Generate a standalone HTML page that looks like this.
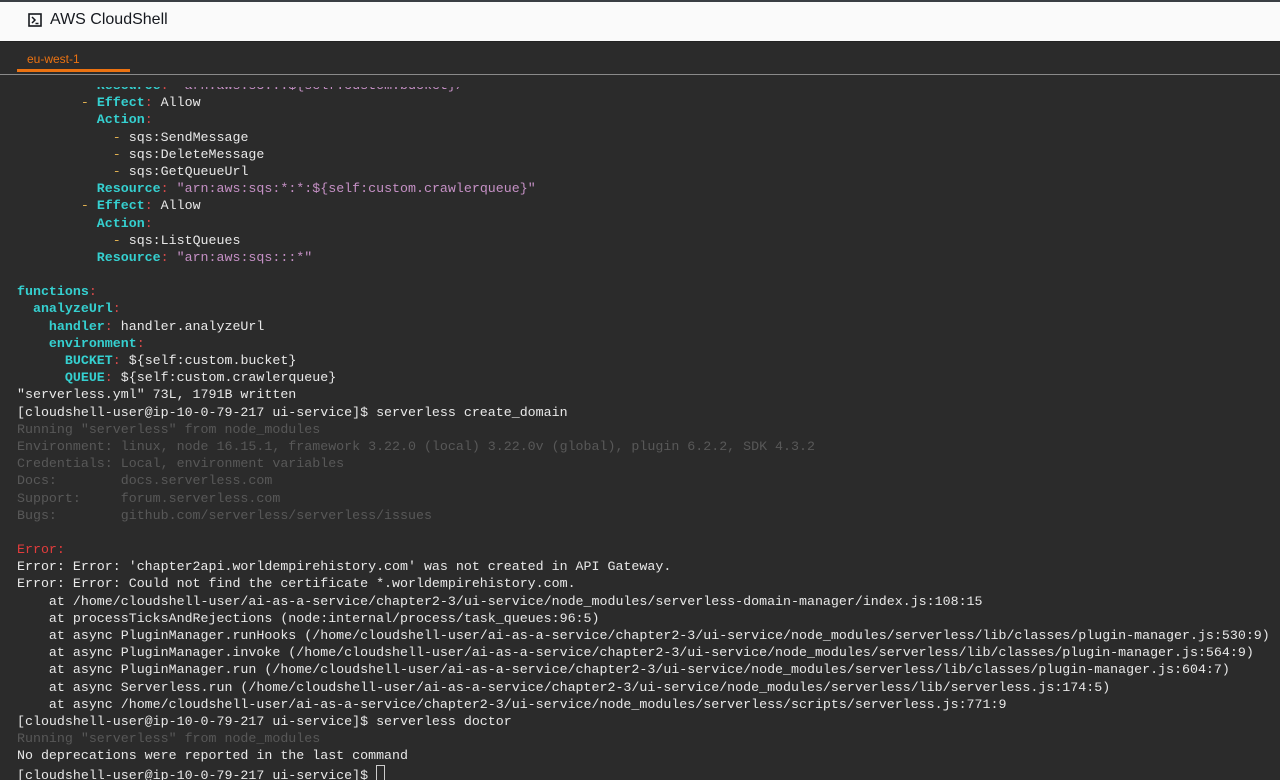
<!DOCTYPE html>
<html><head><meta charset="utf-8"><style>
html,body{margin:0;padding:0;width:1280px;height:780px;overflow:hidden;background:#2b2b2b}
#hdr{position:absolute;left:0;top:0;width:1280px;height:42px;background:#fafafa;border-top:2px solid #3a3f44;box-sizing:border-box;border-bottom:1px solid #222}
#hdr .t{position:absolute;left:50px;top:9px;font:16px "Liberation Sans",sans-serif;color:#16191f}
#hdr svg{position:absolute;left:28px;top:11px}
#tabs{position:absolute;left:0;top:42px;width:1280px;height:32px;background:#2b2b2b;border-bottom:1px solid #8a8a8a}
#tabs .tab{position:absolute;left:17px;top:0;width:113px;height:30px;border-bottom:3px solid #ec7211;box-sizing:border-box;font:12px "Liberation Sans",sans-serif;color:#ec7211;padding:10px 0 0 10px}
#term{position:absolute;left:0;top:77px;width:1280px;height:703px;overflow:hidden}
pre{margin:0;padding:0 0 0 17px;font:13.3px/17.18px "Liberation Mono",monospace;color:#e8e8e8;white-space:pre}
#mask{position:absolute;left:0;top:75px;width:1280px;height:12px;background:#2b2b2b}
.k{color:#35d0d0;font-weight:bold}.c{color:#d84a4a}.s{color:#c590c5}.d{color:#e0b050}.g{color:#585858}.e{color:#e23c3c}
.cur{display:inline-block;width:7px;height:15px;border:1px solid #ccc;vertical-align:-3px}
</style></head><body>
<div id="hdr"><svg width="14" height="14" viewBox="0 0 14 14"><rect x="1" y="1" width="12" height="12" fill="none" stroke="#16191f" stroke-width="1.6"/><path d="M4 4l3 3-3 3M7.5 10.5h3" fill="none" stroke="#16191f" stroke-width="1.5"/></svg><span class="t">AWS CloudShell</span></div>
<div id="tabs"><div class="tab">eu-west-1</div></div>
<div id="term"><pre>          <span class="k">Resource</span><span class="c">:</span> <span class="s">"arn:aws:s3:::${self:custom.bucket}/*"</span>
        <span class="d">-</span> <span class="k">Effect</span><span class="c">:</span> Allow
          <span class="k">Action</span><span class="c">:</span>
            <span class="d">-</span> sqs:SendMessage
            <span class="d">-</span> sqs:DeleteMessage
            <span class="d">-</span> sqs:GetQueueUrl
          <span class="k">Resource</span><span class="c">:</span> <span class="s">"arn:aws:sqs:*:*:${self:custom.crawlerqueue}"</span>
        <span class="d">-</span> <span class="k">Effect</span><span class="c">:</span> Allow
          <span class="k">Action</span><span class="c">:</span>
            <span class="d">-</span> sqs:ListQueues
          <span class="k">Resource</span><span class="c">:</span> <span class="s">"arn:aws:sqs:::*"</span>

<span class="k">functions</span><span class="c">:</span>
  <span class="k">analyzeUrl</span><span class="c">:</span>
    <span class="k">handler</span><span class="c">:</span> handler.analyzeUrl
    <span class="k">environment</span><span class="c">:</span>
      <span class="k">BUCKET</span><span class="c">:</span> ${self:custom.bucket}
      <span class="k">QUEUE</span><span class="c">:</span> ${self:custom.crawlerqueue}
"serverless.yml" 73L, 1791B written
[cloudshell-user@ip-10-0-79-217 ui-service]$ serverless create_domain
<span class="g">Running "serverless" from node_modules
Environment: linux, node 16.15.1, framework 3.22.0 (local) 3.22.0v (global), plugin 6.2.2, SDK 4.3.2
Credentials: Local, environment variables
Docs:        docs.serverless.com
Support:     forum.serverless.com
Bugs:        github.com/serverless/serverless/issues</span>

<span class="e">Error:</span>
Error: Error: 'chapter2api.worldempirehistory.com' was not created in API Gateway.
Error: Error: Could not find the certificate *.worldempirehistory.com.
    at /home/cloudshell-user/ai-as-a-service/chapter2-3/ui-service/node_modules/serverless-domain-manager/index.js:108:15
    at processTicksAndRejections (node:internal/process/task_queues:96:5)
    at async PluginManager.runHooks (/home/cloudshell-user/ai-as-a-service/chapter2-3/ui-service/node_modules/serverless/lib/classes/plugin-manager.js:530:9)
    at async PluginManager.invoke (/home/cloudshell-user/ai-as-a-service/chapter2-3/ui-service/node_modules/serverless/lib/classes/plugin-manager.js:564:9)
    at async PluginManager.run (/home/cloudshell-user/ai-as-a-service/chapter2-3/ui-service/node_modules/serverless/lib/classes/plugin-manager.js:604:7)
    at async Serverless.run (/home/cloudshell-user/ai-as-a-service/chapter2-3/ui-service/node_modules/serverless/lib/serverless.js:174:5)
    at async /home/cloudshell-user/ai-as-a-service/chapter2-3/ui-service/node_modules/serverless/scripts/serverless.js:771:9
[cloudshell-user@ip-10-0-79-217 ui-service]$ serverless doctor
<span class="g">Running "serverless" from node_modules</span>
No deprecations were reported in the last command
[cloudshell-user@ip-10-0-79-217 ui-service]$ <span class="cur"></span></pre></div>
<div id="mask"></div>
</body></html>
